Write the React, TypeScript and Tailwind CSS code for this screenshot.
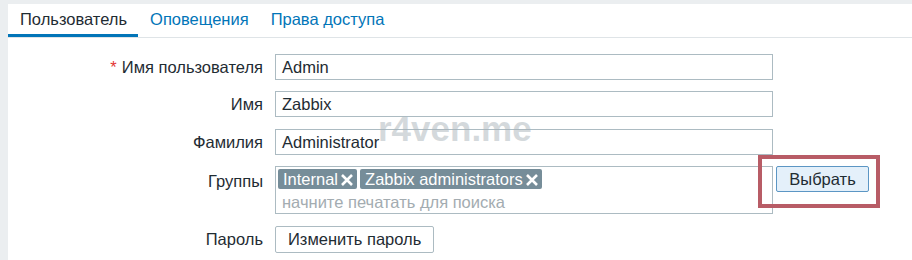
import React from 'react';

const font = { fontFamily: '"Liberation Sans", Arial, sans-serif' };

const Tag: React.FC<{ label: string }> = ({ label }) => (
  <span className="flex h-[20px] items-center gap-[2px] rounded-[2px] bg-[#768d99] pl-[5px] pr-[3px] text-[16.5px] leading-none text-white">
    {label}
    <svg width="14" height="14" viewBox="0 0 14 14" className="mt-[1px]">
      <path d="M2 2 L12 12 M12 2 L2 12" stroke="white" strokeWidth="2.6" strokeLinecap="butt" />
    </svg>
  </span>
);

const Row: React.FC<{ label: string; required?: boolean; children: React.ReactNode; top?: boolean }> = ({
  label,
  required,
  children,
  top,
}) => (
  <div className={`flex ${top ? 'items-start' : 'items-center'}`}>
    <div className={`w-[255px] text-right text-[16.5px] text-[#1f2c33] ${top ? 'pt-[3px]' : ''}`}>
      {required && <span className="mr-[5px] text-[#e33734]">*</span>}
      {label}
    </div>
    <div className="ml-[12px] flex items-start">{children}</div>
  </div>
);

const TextInput: React.FC<{ value: string }> = ({ value }) => (
  <div className="flex h-[26px] w-[498px] items-center border border-[#acbbc2] bg-white px-[6px] text-[16.5px] text-[#1f2c33]">
    {value}
  </div>
);

export default function App() {
  return (
    <div className="relative h-[260px] w-[912px] overflow-hidden bg-[#ebeef0] pl-[8px] pt-[4px]" style={font}>
      <div className="h-full bg-white">
        {/* tabs */}
        <div className="flex h-[34px] items-end border-b border-[#dfe4e7] text-[16.5px]">
          <div className="border-b-[3px] border-[#0275b8] pl-[12px] pr-[11px] pb-[2px] text-[#1f2c33]">Пользователь</div>
          <div className="pl-[12px] pr-[11px] pb-[5px] text-[#0275b8]">Оповещения</div>
          <div className="pl-[11px] pr-[11px] pb-[5px] text-[#0275b8]">Права доступа</div>
        </div>

        <div className="flex flex-col pt-[16px]">
          <Row label="Имя пользователя" required>
            <TextInput value="Admin" />
          </Row>
          <div className="h-[11px]" />
          <Row label="Имя">
            <TextInput value="Zabbix" />
          </Row>
          <div className="h-[12px]" />
          <Row label="Фамилия">
            <TextInput value="Administrator" />
          </Row>
          <div className="h-[11px]" />
          <Row label="Группы" top>
            <div className="flex h-[48px] w-[498px] flex-col border border-[#acbbc2] bg-white px-[2px] pt-[2px]">
              <div className="flex gap-[3px]">
                <Tag label="Internal" />
                <Tag label="Zabbix administrators" />
              </div>
              <div className="pl-[4px] pt-[3px] text-[16.5px] leading-[20px] text-[#a3acb1]">начните печатать для поиска</div>
            </div>
            <button className="ml-[3px] flex h-[26px] w-[93px] items-center justify-center rounded-[2px] border border-[#5c96c4] bg-[#e4f0fa] text-[16.5px] text-[#1f2c33]">
              Выбрать
            </button>
          </Row>
          <div className="h-[12px]" />
          <Row label="Пароль">
            <button className="flex h-[27px] items-center rounded-[2px] border border-[#acbbc2] bg-white px-[12px] text-[16.5px] text-[#1f2c33]">
              Изменить пароль
            </button>
          </Row>
        </div>
      </div>

      {/* watermark */}
      <div className="pointer-events-none absolute left-[378px] top-[109px] text-[35px] font-bold leading-[40px] text-[#a9b4ba]/50">
        r4ven.me
      </div>

      {/* highlight box */}
      <div className="pointer-events-none absolute left-[758px] top-[155px] h-[53px] w-[122px] border-[4px] border-[#b85c66]" />
    </div>
  );
}
